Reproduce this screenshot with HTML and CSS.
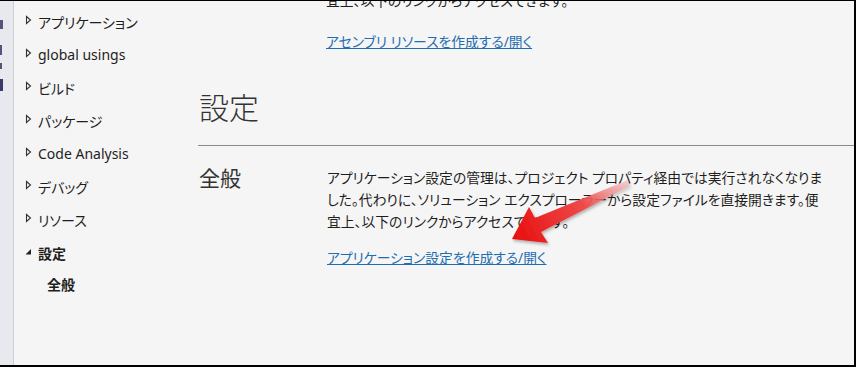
FILE: index.html
```html
<!DOCTYPE html>
<html lang="ja">
<head>
    <meta charset="UTF-8">
    <meta name="viewport" content="width=device-width, initial-scale=1.0">
    <title>プロジェクト プロパティ - 設定</title>
    <link rel="stylesheet" href="styles.css">
</head>
<body>

<div class="frame">
    <div class="strip">
        <i class="mark m1"></i>
        <i class="mark m2"></i>
        <i class="mark m3"></i>
        <i class="mark m4"></i>
    </div>

    <!-- left navigation -->
    <ul class="nav">
        <li><svg class="tri" width="7" height="10" viewBox="0 0 7 10"><polygon points="1.5,1.5 5.5,5 1.5,8.5" fill="none" stroke="#333" stroke-width="1.1"/></svg>アプリケーション</li>
        <li><svg class="tri" width="7" height="10" viewBox="0 0 7 10"><polygon points="1.5,1.5 5.5,5 1.5,8.5" fill="none" stroke="#333" stroke-width="1.1"/></svg>global usings</li>
        <li><svg class="tri" width="7" height="10" viewBox="0 0 7 10"><polygon points="1.5,1.5 5.5,5 1.5,8.5" fill="none" stroke="#333" stroke-width="1.1"/></svg>ビルド</li>
        <li><svg class="tri" width="7" height="10" viewBox="0 0 7 10"><polygon points="1.5,1.5 5.5,5 1.5,8.5" fill="none" stroke="#333" stroke-width="1.1"/></svg>パッケージ</li>
        <li><svg class="tri" width="7" height="10" viewBox="0 0 7 10"><polygon points="1.5,1.5 5.5,5 1.5,8.5" fill="none" stroke="#333" stroke-width="1.1"/></svg>Code Analysis</li>
        <li><svg class="tri" width="7" height="10" viewBox="0 0 7 10"><polygon points="1.5,1.5 5.5,5 1.5,8.5" fill="none" stroke="#333" stroke-width="1.1"/></svg>デバッグ</li>
        <li><svg class="tri" width="7" height="10" viewBox="0 0 7 10"><polygon points="1.5,1.5 5.5,5 1.5,8.5" fill="none" stroke="#333" stroke-width="1.1"/></svg>リソース</li>
        <li class="open"><svg class="tri" width="7" height="10" viewBox="0 0 7 10"><polygon points="6,3 6,8.5 0.5,8.5" fill="#222"/></svg>設定</li>
        <li class="sub">全般</li>
    </ul>

    <!-- property page -->
    <div class="main">
        <div class="row">
            <div class="label"></div>
            <div class="body">
                <p class="cut">宜上、以下のリンクからアクセスできます。</p>
                <a href="#">アセンブリ リソースを作成する/開く</a>
            </div>
        </div>

        <h1>設定</h1>
        <hr>

        <div class="row">
            <div class="label big">全般</div>
            <div class="body">
                <p>アプリケーション設定の管理は、プロジェクト プロパティ経由では実行されなくなりました。代わりに、ソリューション エクスプローラーから設定ファイルを直接開きます。便宜上、以下のリンクからアクセスできます。</p>
                <a href="#">アプリケーション設定を作成する/開く</a>
            </div>
        </div>

        <svg class="arrow" width="140" height="90" viewBox="500 165 140 90">
            <defs>
                <linearGradient id="red" x1="630" y1="183" x2="513" y2="238" gradientUnits="userSpaceOnUse">
                    <stop offset="0" stop-color="#f5b0b0" stop-opacity="0.5"/>
                    <stop offset="0.4" stop-color="#ee4a4a"/>
                    <stop offset="1" stop-color="#e80e0e"/>
                </linearGradient>
                <filter id="shade" x="-20%" y="-20%" width="140%" height="140%">
                    <feDropShadow dx="1" dy="2" stdDeviation="1.5" flood-color="#000" flood-opacity="0.3"/>
                </filter>
            </defs>
            <polygon filter="url(#shade)" fill="url(#red)"
                points="630,186 628,180 535,218 529,207 512,239 548,243 541,232"/>
        </svg>
    </div>
</div>

</body>
</html>
```

FILE: styles.css
```css
body {
    margin: 0;
    padding: 0;
    font-family: "Noto Sans", "Noto Sans CJK JP", sans-serif;
    font-feature-settings: "palt";
    color: #1e1e1e;
    background-color: #f5f5f5;
}
.frame {
    display: flex;
    height: 367px;
    box-sizing: border-box;
    border-top: 1px solid #000;
    border-right: 2px solid #000;
    border-bottom: 2px solid #000;
    background-color: #f5f5f5;
    overflow: hidden;
}
.strip {
    width: 13px;
    flex: none;
    display: flex;
    flex-direction: column;
    background-color: #e8e8ef;
    border-right: 1px solid #cdcdd5;
}
.mark {
    display: block;
    width: 3px;
    background-color: #55557a;
}
.m1 { height: 9px; margin-top: 19px; }
.m2 { height: 10px; margin-top: 16px; width: 2px; }
.m3 { height: 6px; margin-top: 8px; width: 2px; }
.m4 { height: 12px; margin-top: 10px; background-color: #3a3a66; }
.nav {
    list-style: none;
    margin: 0;
    padding: 4px 0 0 11px;
    width: 173px;
    flex: none;
    font-size: 14px;
}
.nav li {
    display: flex;
    align-items: center;
    height: 33px;
}
.nav .tri {
    flex: none;
    margin-right: 6px;
    position: relative;
    top: -2px;
}
.nav .open {
    font-weight: bold;
}
.nav .sub {
    height: 30px;
    padding-left: 22px;
    font-weight: bold;
}
.main {
    position: relative;
    flex: 1;
    font-size: 13.8px;
}
.row {
    display: flex;
}
.label {
    width: 128px;
    flex: none;
}
.label.big {
    font-size: 21px;
    line-height: 20px;
    padding: 1px 0 0 1px;
    color: #333;
}
.body {
    width: 503px;
}
.body p {
    margin: 0 0 14px 0;
    line-height: 22px;
}
.body p.cut {
    margin: -11px 0 19px 0;
}
.body a {
    display: inline-block;
    line-height: 22px;
    color: #1f6db0;
    text-decoration: underline;
}
h1 {
    margin: 35px 0 0 1px;
    font-size: 30px;
    line-height: 40px;
    font-weight: 300;
    color: #333;
}
hr {
    margin: 17px 0 21px 0;
    border: none;
    border-top: 1px solid #8a8a8a;
}
.arrow {
    position: absolute;
    left: 302px;
    top: 164px;
}
```
